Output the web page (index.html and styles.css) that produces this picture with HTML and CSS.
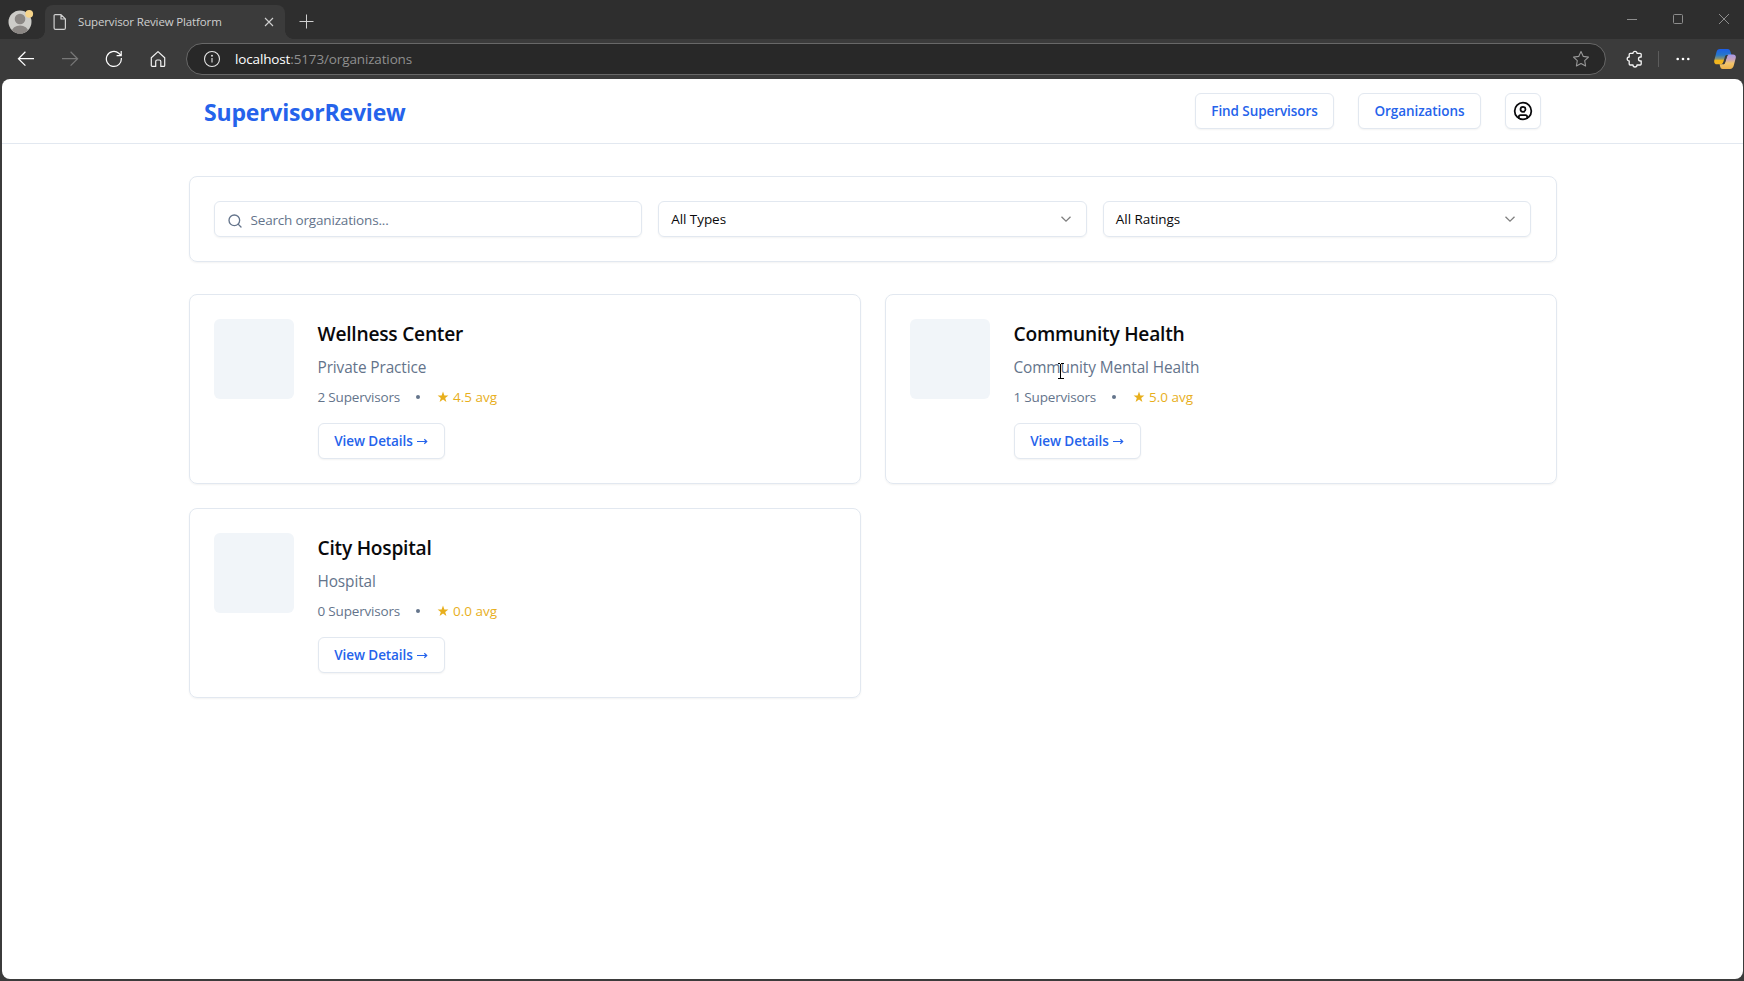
FILE: index.html
```html
<!DOCTYPE html>
<html lang="en">
<head>
<meta charset="utf-8">
<title>Supervisor Review Platform</title>
<link rel="stylesheet" href="styles.css">
</head>
<body>
<div class="browser">
  <div class="titlebar">
    <svg class="profile" width="26" height="26" viewBox="0 0 26 26"><defs><clipPath id="pc"><circle cx="12" cy="14" r="11.5"/></clipPath></defs><circle cx="12" cy="14" r="11.5" fill="#cdccc8"/><g clip-path="url(#pc)" fill="#8b8784"><circle cx="12" cy="11" r="5.3"/><ellipse cx="12" cy="23.3" rx="8.2" ry="5.8"/></g><circle cx="21.2" cy="5.8" r="3.9" fill="#f7d58b"/></svg>
    <div class="tab">
      <svg class="doc" width="14" height="18" viewBox="0 0 14 18" fill="none" stroke="#d0d0d0" stroke-width="1.2" stroke-linejoin="round"><path d="M2.2 1.6H8L12.4 6v8.9a1.5 1.5 0 0 1-1.5 1.5H2.6a1.5 1.5 0 0 1-1.5-1.5V2.7a1.1 1.1 0 0 1 1.1-1.1zM8 1.8V6h4.3"/></svg>
      <span class="tab-title">Supervisor Review Platform</span>
      <svg class="tab-close" width="10" height="10" viewBox="0 0 10 10" stroke="#d0d0d0" stroke-width="1.1"><path d="M1 1l8 8M9 1L1 9"/></svg>
    </div>
    <svg class="tab-new" width="15" height="15" viewBox="0 0 15 15" stroke="#cfcfcf" stroke-width="1"><path d="M7.5.5v14M.5 7.5h14"/></svg>
    <div class="window-controls">
      <svg width="10" height="10" viewBox="0 0 10 10" fill="none" stroke="#8d8d8d"><path d="M0 5.5h10"/></svg>
      <svg width="10" height="10" viewBox="0 0 10 10" fill="none" stroke="#8d8d8d"><rect x=".5" y=".5" width="9" height="9" rx="1"/></svg>
      <svg width="10" height="10" viewBox="0 0 10 10" fill="none" stroke="#8d8d8d"><path d="M0 0l10 10M10 0L0 10"/></svg>
    </div>
  </div>
  <div class="toolbar">
    <div class="nav-icons">
      <svg width="18" height="18" viewBox="0 0 18 18" fill="none" stroke="#fff" stroke-width="1.2"><path d="M17 8.7H1.4M8.4 1.8L1.4 8.7l7 6.9"/></svg>
      <svg width="18" height="18" viewBox="0 0 18 18" fill="none" stroke="#777" stroke-width="1.2"><path d="M1 8.7h15.600M9.600 1.800l7 6.900-7 6.900"/></svg>
      <svg width="18" height="18" viewBox="0 0 18 18" fill="none" stroke="#fff" stroke-width="1.2"><path d="M16.300 8A7.500 7.500 0 1 1 13.800 3.300L16 5.400M16.200 1v4.600h-4.600"/></svg>
      <svg width="18" height="18" viewBox="0 0 18 18" fill="none" stroke="#f2f2f2" stroke-width="1.2" stroke-linejoin="round"><path d="M2.300 7.800L9 1.600l6.700 6.200v7.700a.9.900 0 0 1-.9.900h-3V11.500a1.500 1.500 0 0 0-1.500-1.500H8.200a1.500 1.500 0 0 0-1.500 1.500v4.900h-3.500a.9.900 0 0 1-.9-.9z"/></svg>
    </div>
    <div class="address">
      <svg width="18" height="18" viewBox="0 0 18 18" fill="none" stroke="#e6e6e6" stroke-width="1.100"><circle cx="9" cy="9" r="7.500"/><path d="M9 8v4.600" /><circle cx="9" cy="5.700" r=".4" fill="#e6e6e6"/></svg>
      <span class="url"><span class="host">localhost</span>:5173/organizations</span>
      <svg class="star" width="18" height="18" viewBox="0 0 18 18" fill="none" stroke="#989898" stroke-width="1.100" stroke-linejoin="round"><path d="M9 1.600l2.300 4.800 5.200.7-3.800 3.600.9 5.300L9 13.500 4.400 16l.9-5.300L1.500 7.100l5.200-.7z"/></svg>
    </div>
    <svg class="puzzle" width="18" height="18" viewBox="0 0 18 18" fill="none" stroke="#f4f4f4" stroke-width="1.300" stroke-linejoin="round"><path d="M4.200 3.300H7a2 2 0 0 1 4 0h3.200a1 1 0 0 1 1 1V7h-.7a2 2 0 0 0 0 4h.7v3a1 1 0 0 1-1 1H11a2 2 0 0 1-4 0H4.200a1 1 0 0 1-1-1v-3a2 2 0 0 1 0-4V4.300a1 1 0 0 1 1-1z"/></svg>
    <span class="divider"></span>
    <svg class="dots" width="14" height="4" viewBox="0 0 14 4" fill="#fff"><circle cx="1.700" cy="2" r="1.300"/><circle cx="7" cy="2" r="1.300"/><circle cx="12.300" cy="2" r="1.300"/></svg>
    <svg class="copilot" width="22" height="20" viewBox="0 0 22 20"><defs><linearGradient id="ca" x1="0" y1="0" x2="0" y2="1"><stop offset="0" stop-color="#1c5eea"/><stop offset=".4" stop-color="#2878c8"/><stop offset=".65" stop-color="#8c9470"/><stop offset=".75" stop-color="#efb61c"/><stop offset="1" stop-color="#f3b421"/></linearGradient><linearGradient id="cb" x1="0" y1="0" x2="0" y2="1"><stop offset="0" stop-color="#a898ea"/><stop offset=".35" stop-color="#c8a4ba"/><stop offset=".6" stop-color="#f2c56d"/><stop offset="1" stop-color="#eeb24a"/></linearGradient></defs><path d="M6 0h7.500c1.600 0 2.200.8 2.700 2l.8 2.500.5 1.500h-3.900c-1.500 0-2.200.3-2.600 1.500L9.300 13c-.5 1.600-1.400 2.300-3 2.300H3C.8 15.300-.2 13.600.3 11.300L2.500 3C3 1 4 0 6 0z" fill="url(#ca)"/><path d="M14.500 5.500H19c2.300 0 3.300 1.500 2.700 3.800l-2 7.500c-.5 2-1.700 3.200-3.700 3.200H8.700c-1.500 0-2-.8-2.400-2l-.7-2.700h2.600c1.500 0 2.400-.3 2.800-1.700l2-6.300c.3-1 .7-1.500 1.500-1.800z" fill="url(#cb)"/><path d="M12.300 6.200h2.200c-.9.400-1.300 1-1.600 1.900l-1.800 5.600c-.4 1-1 1.500-2 1.500l.9-2z" fill="#3b3b3b"/></svg>
  </div>

  <div class="page">
    <header class="header">
      <div class="header-inner">
        <a class="logo">SupervisorReview</a>
        <nav class="nav">
          <a class="button nav-find">Find Supervisors</a>
          <a class="button nav-orgs">Organizations</a>
          <a class="button icon-button"><svg width="20" height="20" viewBox="0 0 24 24" fill="none" stroke="#09090b" stroke-width="2.100" stroke-linecap="round" stroke-linejoin="round"><circle cx="12" cy="12" r="10"/><circle cx="12" cy="10" r="3"/><path d="M7 20.662V19a2 2 0 0 1 2-2h6a2 2 0 0 1 2 2v1.662"/></svg></a>
        </nav>
      </div>
    </header>
    <main class="main">
      <section class="filters">
        <div class="field search"><svg width="16" height="16" viewBox="0 0 24 24" fill="none" stroke="#64748b" stroke-width="2" stroke-linecap="round"><circle cx="11" cy="11" r="8"/><path d="M21 21l-4.300-4.300"/></svg><span>Search organizations...</span></div>
        <div class="field"><span>All Types</span><svg width="16" height="16" viewBox="0 0 16 16" fill="none" stroke="#7f7f7f" stroke-width="1.300"><path d="M3.500 5.800L8 10.200l4.500-4.400"/></svg></div>
        <div class="field"><span>All Ratings</span><svg width="16" height="16" viewBox="0 0 16 16" fill="none" stroke="#7f7f7f" stroke-width="1.300"><path d="M3.500 5.800L8 10.200l4.500-4.400"/></svg></div>
      </section>
      <section class="cards">
        <article class="card">
          <div class="thumb"></div>
          <div class="info">
            <h3>Wellness Center</h3>
            <p class="type">Private Practice</p>
            <div class="meta"><span>2 Supervisors</span><i class="bullet"></i><span class="rating"><svg width="12" height="12" viewBox="0 0 12 12"><path d="M6 .6l1.400 3.800 4 .1-3.200 2.500 1.200 3.900L6 8.600l-3.400 2.300 1.200-3.900L.6 4.500l4-.1z"/></svg>4.5 avg</span></div>
            <a class="button details">View Details<svg width="11" height="7" viewBox="0 0 11 7"><path d="M0 3.500h9.500M7.300 1.300l2.400 2.200-2.400 2.200"/></svg></a>
          </div>
        </article>
        <article class="card">
          <div class="thumb"></div>
          <div class="info">
            <h3>Community Health</h3>
            <p class="type">Community Mental Health</p>
            <div class="meta"><span>1 Supervisors</span><i class="bullet"></i><span class="rating"><svg width="12" height="12" viewBox="0 0 12 12"><path d="M6 .6l1.400 3.800 4 .1-3.200 2.500 1.200 3.900L6 8.600l-3.400 2.300 1.200-3.900L.6 4.500l4-.1z"/></svg>5.0 avg</span></div>
            <a class="button details">View Details<svg width="11" height="7" viewBox="0 0 11 7"><path d="M0 3.500h9.500M7.300 1.300l2.400 2.200-2.400 2.200"/></svg></a>
          </div>
        </article>
        <article class="card">
          <div class="thumb"></div>
          <div class="info">
            <h3>City Hospital</h3>
            <p class="type">Hospital</p>
            <div class="meta"><span>0 Supervisors</span><i class="bullet"></i><span class="rating"><svg width="12" height="12" viewBox="0 0 12 12"><path d="M6 .6l1.400 3.800 4 .1-3.200 2.500 1.200 3.900L6 8.600l-3.400 2.300 1.200-3.900L.6 4.500l4-.1z"/></svg>0.0 avg</span></div>
            <a class="button details">View Details<svg width="11" height="7" viewBox="0 0 11 7"><path d="M0 3.500h9.500M7.300 1.300l2.400 2.200-2.400 2.200"/></svg></a>
          </div>
        </article>
      </section>
    </main>
  </div>
  <svg class="cursor" width="8" height="17" viewBox="0 0 8 17" fill="none" stroke="#000" stroke-width="1" shape-rendering="crispEdges"><path d="M.5 .5h2.500M4 .5h2.500M3.500 1v15M.5 15.500h2.500M4 15.500h2.500"/></svg>
</div>
</body>
</html>
```
FILE: styles.css
```css
* { box-sizing: border-box; }
body { margin: 0; font-family: "Open Sans", "Noto Sans", sans-serif; color: #09090b; }
svg { display: block; flex: none; }
h3, p { margin: 0; }

/* Browser frame */
.browser { position: relative; display: flex; flex-direction: column; width: 1744px; height: 981px; background: #3b3b3b; overflow: hidden; }
.titlebar { display: flex; height: 39px; background: #2e2e2e; }
.profile { margin: 8px 11px 0 8px; }
.tab { position: relative; display: flex; align-items: center; width: 240px; height: 34px; margin-top: 5px; padding: 0 11px 0 8px; background: #3b3b3b; border-radius: 8px 8px 0 0; color: #cfcfcf; }
.tab::before, .tab::after { content: ""; position: absolute; bottom: 0; width: 8px; height: 8px; }
.tab::before { left: -8px; background: radial-gradient(circle at 0 0, transparent 7.5px, #3b3b3b 8px); }
.tab::after { right: -8px; background: radial-gradient(circle at 100% 0, transparent 7.5px, #3b3b3b 8px); }
.tab-title { flex: 1; margin-left: 11px; padding-bottom: 2px; font-size: 11.5px; letter-spacing: -0.14px; white-space: nowrap; }
.tab-new { margin: 14px 0 0 14px; }
.window-controls { display: flex; gap: 36px; margin: 14px 15px 0 auto; }
.toolbar { display: flex; align-items: center; height: 40px; }
.nav-icons { display: flex; gap: 26px; margin-left: 17px; }
.address { display: flex; align-items: center; width: 1420px; height: 32px; margin-left: 19px; padding: 0 15px 0 16px; border: 1px solid #686868; border-radius: 16px; background: #282828; }
.url { flex: 1; margin-left: 14px; font-size: 13.5px; letter-spacing: -0.14px; color: #8f8f8f; }
.host { color: #fff; }
.puzzle { margin-left: 20px; }
.divider { width: 1px; height: 16px; margin-left: 14px; background: #5c5c5c; }
.dots { margin-left: 17px; }
.copilot { margin-left: 24px; }

/* Page */
.page { flex: none; width: 1741px; height: 900px; margin-left: 2px; background: #fff; border-radius: 8px; }
.header { height: 65px; border-bottom: 1px solid #e2e8f0; }
.header-inner { display: flex; justify-content: space-between; align-items: center; height: 64px; width: 1337px; margin-left: 202px; }
.logo { padding-top: 2px; font-size: 23px; font-weight: 700; letter-spacing: -0.2px; color: #2563eb; }
.nav { display: flex; gap: 24px; }
.button { display: flex; align-items: center; justify-content: center; height: 36px; border: 1px solid #e2e8f0; border-radius: 6px; background: #fff; box-shadow: 0 1px 2px rgba(0, 0, 0, 0.05); font-size: 13.5px; font-weight: 600; letter-spacing: -0.08px; color: #2563eb; white-space: nowrap; }
.nav-find { width: 139px; }
.nav-orgs { width: 123px; }
.icon-button { width: 36px; }
.main { width: 1368px; margin-left: 186.5px; padding-top: 32px; }
.filters { display: grid; grid-template-columns: repeat(3, 1fr); gap: 16px; padding: 24px; border: 1px solid #e2e8f0; border-radius: 8px; box-shadow: 0 1px 2px rgba(0, 0, 0, 0.05); }
.field { display: flex; align-items: center; justify-content: space-between; height: 36px; padding: 0 12px; border: 1px solid #e2e8f0; border-radius: 6px; box-shadow: 0 1px 2px rgba(0, 0, 0, 0.05); font-size: 13.5px; letter-spacing: -0.05px; }
.search { justify-content: flex-start; gap: 8px; padding-top: 2px; color: #64748b; letter-spacing: -0.17px; }
.search svg { margin-top: 2px; }
.cards { display: grid; grid-template-columns: repeat(2, 1fr); gap: 24px; margin-top: 32px; }
.card { display: flex; gap: 24px; padding: 24px; border: 1px solid #e2e8f0; border-radius: 8px; box-shadow: 0 1px 2px rgba(0, 0, 0, 0.05); }
.thumb { width: 80px; height: 80px; border-radius: 6px; background: #f1f5f9; }
h3 { padding-top: 1px; font-size: 19.2px; font-weight: 600; line-height: 28px; letter-spacing: -0.24px; }
.type { margin-top: 8px; font-size: 15.4px; line-height: 24px; letter-spacing: -0.12px; color: #64748b; }
.meta { display: flex; align-items: center; gap: 16px; margin-top: 7px; font-size: 13.5px; line-height: 20px; letter-spacing: -0.18px; color: #64748b; }
.bullet { width: 4px; height: 4px; margin: 0 1px 0 0; border-radius: 50%; background: #64748b; }
.rating { display: flex; align-items: center; gap: 4px; letter-spacing: 0; color: #e8af1c; }
.rating svg { fill: #e8af1c; }
.details { width: 127px; margin-top: 16px; }
.details svg { margin-left: 4px; fill: none; stroke: #2563eb; stroke-width: 1.2; }

/* Text pointer over the page */
.cursor { position: absolute; left: 1057px; top: 363px; }
```
